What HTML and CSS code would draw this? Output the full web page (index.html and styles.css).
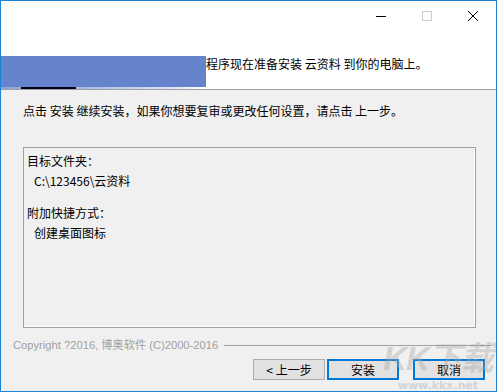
FILE: index.html
```html
<!DOCTYPE html>
<html lang="zh-CN">
<head>
    <meta charset="UTF-8">
    <title>云资料 安装</title>
    <link rel="stylesheet" href="styles.css">
</head>
<body>

<div class="window">
    <div class="header">
        <div class="titlebar">
            <span class="tb-btn">
                <svg width="10" height="10" viewBox="0 0 10 10"><path d="M0 5.5h10" stroke="#000" stroke-width="1"/></svg>
            </span>
            <span class="tb-btn">
                <svg width="10" height="10" viewBox="0 0 10 10"><rect x="0.5" y="0.5" width="9" height="9" fill="none" stroke="#ccc" stroke-width="1"/></svg>
            </span>
            <span class="tb-btn">
                <svg width="10" height="10" viewBox="0 0 10 10"><path d="M0 0L10 10M10 0L0 10" stroke="#000" stroke-width="1"/></svg>
            </span>
        </div>
        <div class="banner">
            <div class="banner-logo">
                <div class="logo-fill"></div>
                <div class="logo-strip"><div class="strip-bar"></div></div>
            </div>
            <div class="banner-text">程序现在准备安装 云资料 到你的电脑上。</div>
        </div>
    </div>

    <div class="main">
        <div class="content">
            <p class="intro">点击 安装 继续安装，如果你想要复审或更改任何设置，请点击 上一步。</p>
            <div class="summary">
                <div class="sum-line">目标文件夹：</div>
                <div class="sum-line indent">C:\123456\云资料</div>
                <div class="sum-line gap">附加快捷方式：</div>
                <div class="sum-line indent">创建桌面图标</div>
            </div>
        </div>

        <div class="copyright">
            <span class="copy-text">Copyright ?2016, 博奥软件 (C)2000-2016</span>
            <span class="copy-rule"></span>
        </div>

        <div class="buttons">
            <button class="btn">&lt; 上一步</button>
            <button class="btn btn-focus">安装</button>
            <button class="btn btn-focus btn-cancel">取消</button>
        </div>

        <div class="watermark">
            <div class="wm-logo">KK下载</div>
            <div class="wm-url">www.kkx.net</div>
        </div>
    </div>
</div>

</body>
</html>
```

FILE: styles.css
```css
body {
    margin: 0;
    padding: 0;
    background-color: #fff;
    font-family: "Noto Sans CJK SC", "Liberation Sans", sans-serif;
    font-size: 12px;
    color: #000;
}

.window {
    width: 497px;
    height: 392px;
    box-sizing: border-box;
    border: 1px solid #1883d7;
    display: flex;
    flex-direction: column;
    background-color: #f0f0f0;
    overflow: hidden;
}

/* top white area */
.header {
    height: 88px;
    background-color: #fff;
    border-bottom: 1px solid #a0a0a0;
    display: flex;
    flex-direction: column;
}

.titlebar {
    height: 30px;
    display: flex;
    justify-content: flex-end;
}

.tb-btn {
    width: 46px;
    height: 30px;
    display: flex;
    align-items: center;
    justify-content: center;
}

.tb-btn svg {
    display: block;
    margin-top: -1px;
}

.banner {
    margin-top: 25px;
    display: flex;
    align-items: flex-start;
}

.banner-logo {
    width: 205px;
}

.logo-fill {
    height: 31px;
    background-color: #6584cc;
}

.logo-strip {
    height: 2px;
    background: linear-gradient(to right, #8ea4d8, #a8bbe6 40%, #dfe6f6 85%, #fff);
}

.strip-bar {
    margin-left: 20px;
    width: 55px;
    height: 2px;
    background-color: #000014;
}

.banner-text {
    line-height: 16px;
}

/* lower grey area */
.main {
    flex: 1;
    position: relative;
    padding: 0 4px 0 12px;
    display: flex;
    flex-direction: column;
}

.content {
    padding: 0 16px 0 10px;
}

.intro {
    margin: 13px 0 0 0;
    line-height: 16px;
}

.summary {
    margin-top: 28px;
    height: 176px;
    border: 1px solid #a0a0a0;
    box-shadow: inset -1px -1px 0 #fff;
    padding: 3px 0 0 3px;
}

.sum-line {
    line-height: 20px;
}

.sum-line.indent {
    padding-left: 7px;
}

.sum-line.gap {
    margin-top: 12px;
}

.copyright {
    margin-top: 9px;
    display: flex;
    align-items: center;
    line-height: 16px;
    font-family: "Liberation Sans", "Noto Sans CJK SC", sans-serif;
    font-size: 11.2px;
    color: #a0a0a0;
}

.copy-text {
    white-space: nowrap;
}

.copy-rule {
    flex: 1;
    margin-left: 6px;
    border-top: 1px solid #a0a0a0;
}

.buttons {
    margin-top: 6px;
    padding-right: 7px;
    display: flex;
    justify-content: flex-end;
    gap: 2px;
}

.btn {
    width: 72px;
    height: 21px;
    box-sizing: border-box;
    padding: 0;
    font-family: "Noto Sans CJK SC", "Liberation Sans", sans-serif;
    font-size: 12px;
    color: #000;
    background-color: #e1e1e1;
    border: 1px solid #adadad;
    line-height: 16px;
}

.btn-focus {
    border: 2px solid #0078d7;
}

.btn-cancel {
    margin-left: 12px;
}

/* site watermark over the corner */
.watermark {
    position: absolute;
    right: 0;
    bottom: 0;
    width: 116px;
    text-align: center;
    color: #a8a8a8;
    opacity: 0.4;
    pointer-events: none;
}

.wm-logo {
    font-family: "Liberation Sans", "Noto Sans CJK SC", sans-serif;
    font-size: 33px;
    font-weight: bold;
    font-style: italic;
    line-height: 38px;
    letter-spacing: -1px;
}

.wm-url {
    font-family: "DejaVu Sans", sans-serif;
    font-weight: bold;
    font-size: 11px;
    line-height: 12px;
    margin-top: 2px;
    margin-bottom: -1px;
}
```
